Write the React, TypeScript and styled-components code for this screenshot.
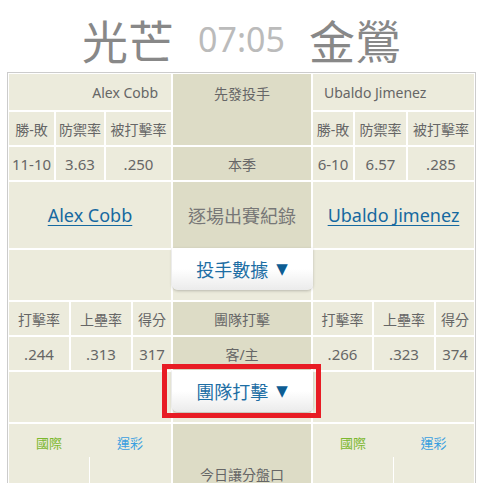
import React from 'react';
import styled, { createGlobalStyle } from 'styled-components';

const GlobalStyle = createGlobalStyle`
  html, body { margin: 0; padding: 0; background: #fff; }
  body {
    font-family: "Noto Sans", "Noto Sans CJK TC", sans-serif;
    color: #666;
    overflow: hidden;
  }
`;

const Page = styled.div`
  width: 477px;
  padding-left: 7px;
  box-sizing: border-box;
`;

const Title = styled.h1`
  margin: 0;
  width: 469px;
  height: 72px;
  padding-top: 6px;
  box-sizing: border-box;
  display: flex;
  align-items: center;
  justify-content: center;
  gap: 24px;
  font-weight: normal;
`;

const Team = styled.span`
  font-family: "Noto Sans CJK TC", sans-serif;
  font-size: 46px;
  line-height: 1;
  color: #888;
`;

const Time = styled.span`
  font-family: "Noto Sans", sans-serif;
  font-size: 34px;
  line-height: 1;
  color: #bbb;
`;

const Board = styled.div`
  width: 469px;
  box-sizing: border-box;
  border: 1px solid #ccc;
  padding: 1px;
  background: #fff;
  display: grid;
  grid-template-columns: 162px 138px 161px;
  grid-template-rows: 36px 33px 33px 66px 50px 33px 33px 50px 100px;
  gap: 2px;
`;

const Cell = styled.div<{ $dark?: boolean; $span?: number; $justify?: string; $pad?: string; $top?: boolean }>`
  background: ${(p) => (p.$dark ? '#dddcc6' : '#ecebdc')};
  display: flex;
  align-items: ${(p) => (p.$top ? 'flex-start' : 'center')};
  justify-content: ${(p) => p.$justify || 'center'};
  padding: ${(p) => p.$pad || '0'};
  grid-row: ${(p) => (p.$span ? `span ${p.$span}` : 'auto')};
  font-size: 14px;
  color: #666;
  min-width: 0;
  box-sizing: border-box;
  white-space: nowrap;
`;

const SubGrid = styled.div<{ $cols: string }>`
  display: grid;
  grid-template-columns: ${(p) => p.$cols};
  gap: 2px;
`;

const SubCell = styled.div<{ $value?: boolean }>`
  background: #ecebdc;
  display: flex;
  align-items: center;
  justify-content: center;
  font-size: ${(p) => (p.$value ? '15px' : '14px')};
  color: #666;
  white-space: nowrap;
`;

const PlayerLink = styled.a`
  font-size: 18px;
  color: #1669a0;
  text-decoration: underline;
  text-underline-offset: 3px;
  cursor: pointer;
`;

const LogTitle = styled.span`
  font-size: 18px;
  color: #777;
`;

const ButtonCell = styled.div`
  position: relative;
  background: #ecebdc;
  display: flex;
  align-items: flex-start;
  justify-content: center;
`;

const DropButton = styled.button`
  width: 141px;
  height: 42px;
  margin: -2px -2px 0;
  border: none;
  border-radius: 0 0 6px 6px;
  background: linear-gradient(#ffffff 50%, #ebebeb);
  box-shadow: 0 1px 3px rgba(0, 0, 0, 0.22);
  font-family: "Noto Sans CJK TC", sans-serif;
  font-size: 18px;
  color: #1d6ea4;
  display: flex;
  align-items: center;
  justify-content: center;
  gap: 8px;
  padding: 0;
  cursor: pointer;
`;

const Arrow = styled.span`
  font-family: "DejaVu Sans", sans-serif;
  font-size: 15px;
  color: #0d5d93;
`;

const Highlight = styled.div`
  position: absolute;
  left: -11px;
  top: -8px;
  width: 159px;
  height: 54px;
  box-sizing: border-box;
  border: 5px solid #e81c24;
  pointer-events: none;
`;

const OddsBox = styled.div`
  background: #ecebdc;
  display: grid;
  grid-template-rows: 33px 1fr;
`;

const OddsRow = styled.div<{ $split?: boolean }>`
  display: grid;
  grid-template-columns: 80px 1fr;
  gap: ${(p) => (p.$split ? '1px' : '0')};
  background: ${(p) => (p.$split ? '#fff' : 'transparent')};
`;

const OddsLabel = styled.div<{ $color: string }>`
  display: flex;
  align-items: center;
  justify-content: center;
  font-family: "Noto Sans CJK TC", sans-serif;
  font-size: 13px;
  color: ${(p) => p.$color};
  padding-top: 3px;
`;

const OddsBody = styled.div`
  background: #ecebdc;
`;

type Pitcher = { name: string; wl: string; era: string; baa: string };
type TeamStats = { avg: string; obp: string; runs: string };

const away: Pitcher = { name: 'Alex Cobb', wl: '11-10', era: '3.63', baa: '.250' };
const home: Pitcher = { name: 'Ubaldo Jimenez', wl: '6-10', era: '6.57', baa: '.285' };
const awayTeam: TeamStats = { avg: '.244', obp: '.313', runs: '317' };
const homeTeam: TeamStats = { avg: '.266', obp: '.323', runs: '374' };

const PitchHeaders = ({ cols }: { cols: string }) => (
  <SubGrid $cols={cols}>
    <SubCell>勝-敗</SubCell>
    <SubCell>防禦率</SubCell>
    <SubCell>被打擊率</SubCell>
  </SubGrid>
);

const PitchValues = ({ cols, p }: { cols: string; p: Pitcher }) => (
  <SubGrid $cols={cols}>
    <SubCell $value>{p.wl}</SubCell>
    <SubCell $value>{p.era}</SubCell>
    <SubCell $value>{p.baa}</SubCell>
  </SubGrid>
);

const BatHeaders = ({ cols }: { cols: string }) => (
  <SubGrid $cols={cols}>
    <SubCell>打擊率</SubCell>
    <SubCell>上壘率</SubCell>
    <SubCell>得分</SubCell>
  </SubGrid>
);

const BatValues = ({ cols, t }: { cols: string; t: TeamStats }) => (
  <SubGrid $cols={cols}>
    <SubCell $value>{t.avg}</SubCell>
    <SubCell $value>{t.obp}</SubCell>
    <SubCell $value>{t.runs}</SubCell>
  </SubGrid>
);

const Odds = () => (
  <OddsBox>
    <OddsRow>
      <OddsLabel $color="#7cb82f">國際</OddsLabel>
      <OddsLabel $color="#3a9fe0">運彩</OddsLabel>
    </OddsRow>
    <OddsRow $split>
      <OddsBody />
      <OddsBody />
    </OddsRow>
  </OddsBox>
);

const LEFT_P = '45px 48px 65px';
const RIGHT_P = '40px 51px 66px';
const LEFT_T = '60px 60px 38px';
const RIGHT_T = '59px 60px 38px';

export default function App() {
  return (
    <Page>
      <GlobalStyle />
      <Title>
        <Team>光芒</Team>
        <Time>07:05</Time>
        <Team>金鶯</Team>
      </Title>
      <Board>
        <Cell $justify="flex-end" $pad="0 13px 0 0">{away.name}</Cell>
        <Cell $dark $span={2} $top $pad="9px 0 0">先發投手</Cell>
        <Cell $justify="flex-start" $pad="0 0 0 11px">{home.name}</Cell>

        <PitchHeaders cols={LEFT_P} />
        <PitchHeaders cols={RIGHT_P} />

        <PitchValues cols={LEFT_P} p={away} />
        <Cell $dark>本季</Cell>
        <PitchValues cols={RIGHT_P} p={home} />

        <Cell><PlayerLink>{away.name}</PlayerLink></Cell>
        <Cell $dark><LogTitle>逐場出賽紀錄</LogTitle></Cell>
        <Cell><PlayerLink>{home.name}</PlayerLink></Cell>

        <Cell />
        <ButtonCell>
          <DropButton>投手數據<Arrow>▼</Arrow></DropButton>
        </ButtonCell>
        <Cell />

        <BatHeaders cols={LEFT_T} />
        <Cell $dark>團隊打擊</Cell>
        <BatHeaders cols={RIGHT_T} />

        <BatValues cols={LEFT_T} t={awayTeam} />
        <Cell $dark>客/主</Cell>
        <BatValues cols={RIGHT_T} t={homeTeam} />

        <Cell />
        <ButtonCell>
          <DropButton>團隊打擊<Arrow>▼</Arrow></DropButton>
          <Highlight />
        </ButtonCell>
        <Cell />

        <Odds />
        <Cell $dark>今日讓分盤口</Cell>
        <Odds />
      </Board>
    </Page>
  );
}
